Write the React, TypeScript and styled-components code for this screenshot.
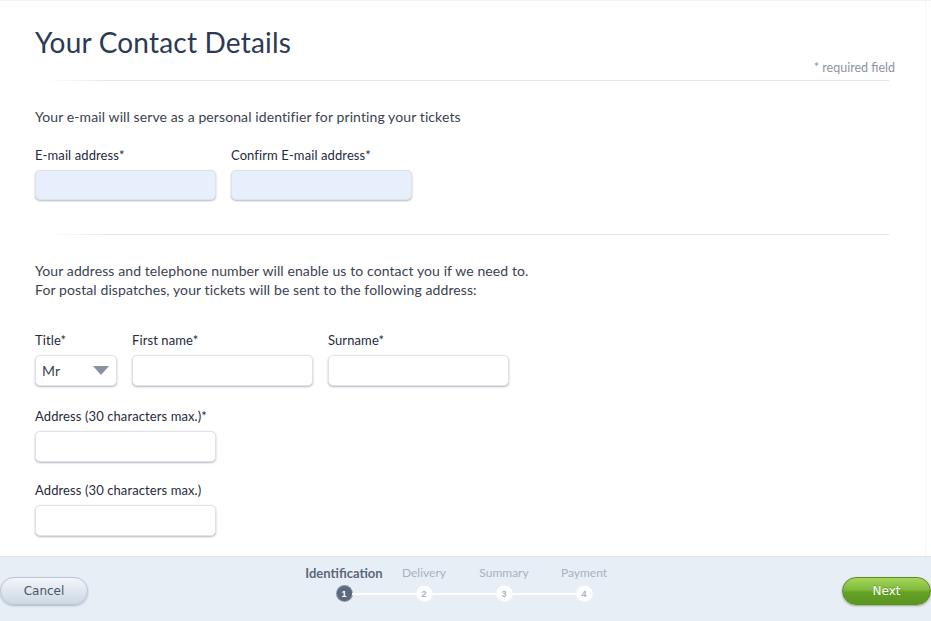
import React from "react";
import styled, { createGlobalStyle, css } from "styled-components";

const GlobalStyle = createGlobalStyle`
    html, body {
        margin: 0;
        padding: 0;
        background: #ffffff;
    }
    body {
        font-family: Lato, "Noto Sans", "Liberation Sans", sans-serif;
        color: #3a4250;
    }
`;

const Page = styled.div`
    width: 931px;
    height: 621px;
    display: flex;
    flex-direction: column;
    border-top: 1px solid #f1f2f4;
    box-sizing: border-box;
    overflow: hidden;
`;

const Main = styled.div`
    flex: 1;
    padding: 0 30px 0 35px;
    display: flex;
    flex-direction: column;
    border-right: 1px solid #f6f7f9;
    margin-right: 5px;
`;

const Title = styled.h1`
    margin: 24px 0 0 0;
    font-size: 28px;
    line-height: 34px;
    font-weight: 400;
    color: #2b3a55;
    letter-spacing: 0.2px;
`;

const RequiredNote = styled.div`
    align-self: flex-end;
    margin-top: 2px;
    font-size: 12.5px;
    line-height: 14px;
    color: #8b94a3;
`;

const Divider = styled.div<{ $top: number }>`
    height: 1px;
    margin: ${p => p.$top}px 6px 0 10px;
    background: linear-gradient(90deg, rgba(226, 229, 234, 0) 0%, #e2e5ea 8%, #e2e5ea 100%);
`;

const Text = styled.p<{ $top: number }>`
    margin: ${p => p.$top}px 0 0 0;
    font-size: 14px;
    line-height: 19px;
    letter-spacing: 0.1px;
    color: #3a4250;
`;

const FieldRow = styled.div<{ $top: number }>`
    display: flex;
    gap: 15px;
    margin-top: ${p => p.$top}px;
`;

const Field = styled.div`
    display: flex;
    flex-direction: column;
`;

const Label = styled.label`
    font-size: 13px;
    line-height: 16px;
    font-weight: 400;
    color: #1f2b3c;
    margin-bottom: 7px;
    letter-spacing: 0.1px;
`;

const inputBase = css`
    box-sizing: border-box;
    height: 31px;
    border: 1px solid #dfe3e9;
    border-radius: 5px;
    box-shadow: 0 1px 2px rgba(40, 50, 70, 0.35);
    font-family: inherit;
    font-size: 14px;
    color: #3a4250;
    padding: 0 7px;
    outline: none;
`;

const Input = styled.input<{ $filled?: boolean }>`
    ${inputBase}
    width: 181px;
    height: ${p => (p.$filled ? 30 : 31)}px;
    background: ${p => (p.$filled ? "#e7effc" : "#ffffff")};
`;

const Select = styled.div`
    ${inputBase}
    width: 82px;
    display: flex;
    align-items: center;
    justify-content: space-between;
    background: #ffffff;
    padding: 0 7px 0 6px;
`;

const Footer = styled.div`
    height: 64px;
    flex-shrink: 0;
    background: #e8eef5;
    border-top: 1px solid #dde4ec;
    display: grid;
    grid-template-columns: 1fr auto 1fr;
    align-items: start;
`;

const PillButton = styled.button<{ $primary?: boolean }>`
    margin-top: 20px;
    height: 28px;
    width: 89px;
    border-radius: 14px;
    font-family: "DejaVu Sans", Verdana, sans-serif;
    font-size: 12px;
    cursor: pointer;
    ${p =>
        p.$primary
            ? css`
                  justify-self: end;
                  color: #ffffff;
                  border: 1px solid #5c8f22;
                  background: linear-gradient(180deg, #a6d65a 0%, #7fb93a 45%, #64a126 55%, #5b9620 100%);
                  box-shadow: 0 1px 2px rgba(40, 70, 10, 0.45);
                  text-shadow: 0 -1px 0 rgba(40, 80, 10, 0.35);
              `
            : css`
                  justify-self: start;
                  width: 88px;
                  color: #4a5565;
                  border: 1px solid #b9c6d4;
                  background: linear-gradient(180deg, #f3f6fa 0%, #dfe6ef 50%, #cdd8e4 100%);
                  box-shadow: 0 1px 2px rgba(60, 80, 110, 0.35);
              `}
`;

const Stepper = styled.div`
    display: flex;
    flex-direction: column;
    align-items: center;
    padding-top: 9px;
    margin-left: -3px;
`;

const StepLabels = styled.div`
    display: flex;
`;

const StepLabel = styled.div<{ $active?: boolean }>`
    width: 80px;
    display: flex;
    justify-content: center;
    white-space: nowrap;
    font-size: ${p => (p.$active ? 13 : 12)}px;
    line-height: 14px;
    font-weight: ${p => (p.$active ? 700 : 400)};
    color: ${p => (p.$active ? "#5d6878" : "#a9b2be")};
`;

const Track = styled.div`
    display: flex;
    align-items: center;
    margin-top: 6px;
`;

const Dot = styled.div<{ $active?: boolean }>`
    width: 15px;
    height: 15px;
    border-radius: 50%;
    display: flex;
    align-items: center;
    justify-content: center;
    font-size: 9px;
    font-weight: 700;
    font-family: "Liberation Sans", Arial, sans-serif;
    background: ${p => (p.$active ? "#5b697c" : "#ffffff")};
    color: ${p => (p.$active ? "#ffffff" : "#a9b2be")};
    box-shadow: 0 0 0 1px ${p => (p.$active ? "#8796a8" : "#f4f7fb")};
`;

const Connector = styled.div`
    width: 65px;
    height: 2px;
    background: #ffffff;
`;

const steps = ["Identification", "Delivery", "Summary", "Payment"];

export default function App() {
    return (
        <>
            <GlobalStyle />
            <Page>
                <Main>
                    <Title>Your Contact Details</Title>
                    <RequiredNote>* required field</RequiredNote>
                    <Divider $top={5} />

                    <Text $top={26}>Your e-mail will serve as a personal identifier for printing your tickets</Text>
                    <FieldRow $top={21}>
                        <Field>
                            <Label>E-mail address*</Label>
                            <Input $filled />
                        </Field>
                        <Field>
                            <Label>Confirm E-mail address*</Label>
                            <Input $filled />
                        </Field>
                    </FieldRow>

                    <Divider $top={34} />

                    <Text $top={26}>
                        Your address and telephone number will enable us to contact you if we need to.
                        <br />
                        For postal dispatches, your tickets will be sent to the following address:
                    </Text>

                    <FieldRow $top={33}>
                        <Field>
                            <Label>Title*</Label>
                            <Select>
                                <span>Mr</span>
                                <svg width="16" height="9" viewBox="0 0 16 9">
                                    <path d="M0 0 L16 0 L8 9 Z" fill="#8592a5" />
                                </svg>
                            </Select>
                        </Field>
                        <Field>
                            <Label>First name*</Label>
                            <Input />
                        </Field>
                        <Field>
                            <Label>Surname*</Label>
                            <Input />
                        </Field>
                    </FieldRow>

                    <FieldRow $top={22}>
                        <Field>
                            <Label>Address (30 characters max.)*</Label>
                            <Input />
                        </Field>
                    </FieldRow>

                    <FieldRow $top={20}>
                        <Field>
                            <Label>Address (30 characters max.)</Label>
                            <Input />
                        </Field>
                    </FieldRow>
                </Main>

                <Footer>
                    <PillButton>Cancel</PillButton>
                    <Stepper>
                        <StepLabels>
                            {steps.map((s, i) => (
                                <StepLabel key={s} $active={i === 0}>
                                    {s}
                                </StepLabel>
                            ))}
                        </StepLabels>
                        <Track>
                            {steps.map((s, i) => (
                                <React.Fragment key={s}>
                                    {i > 0 && <Connector />}
                                    <Dot $active={i === 0}>{i + 1}</Dot>
                                </React.Fragment>
                            ))}
                        </Track>
                    </Stepper>
                    <PillButton $primary>Next</PillButton>
                </Footer>
            </Page>
        </>
    );
}
